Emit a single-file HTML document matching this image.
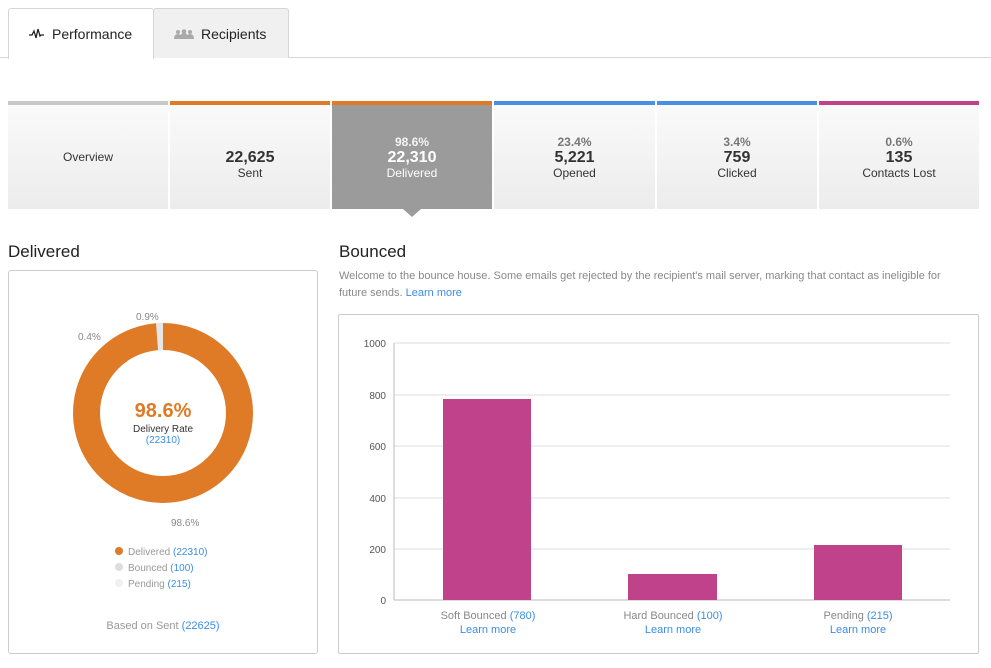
<!DOCTYPE html>
<html><head><style>
*{margin:0;padding:0;box-sizing:border-box}
body{width:991px;height:668px;background:#fff;font-family:"Liberation Sans",sans-serif;position:relative;overflow:hidden;color:#333}
.abs{position:absolute}
.tab{position:absolute;top:8px;height:50px;border:1px solid #d6d6d6;border-bottom:none;border-radius:3px 3px 0 0;font-size:14px;color:#222;display:flex;align-items:center}
.tile{position:absolute;top:101px;height:108px;width:160px;border-top:4px solid;background:linear-gradient(#fafafa,#ececec);text-align:center;display:flex;flex-direction:column;justify-content:center;align-items:center;color:#333}
.tile .p{font-size:12px;color:#777;font-weight:bold}
.tile .n{font-size:16px;font-weight:bold;line-height:17px}
.tile .l{font-size:12px}
.blue{color:#3a8ee6}
.g{color:#888}
</style></head><body>
<div class="abs" style="left:0;top:57px;width:991px;height:1px;background:#d6d6d6"></div>
<div class="tab" style="left:8px;width:146px;background:#fff;height:51px;padding-left:20px">
<svg width="16" height="12" viewBox="0 0 16 12" style="margin-right:7px"><path d="M0 7h3l2-4 2 7 2-9 2 7 1-1h3" fill="none" stroke="#222" stroke-width="1.3"/></svg>Performance</div>
<div class="tab" style="left:153px;width:136px;background:#f0f0f0;padding-left:20px">
<svg width="20" height="10" viewBox="0 0 20 10" style="margin-right:7px"><g fill="#aaa"><circle cx="4" cy="3" r="2"/><circle cx="10" cy="2.5" r="2.3"/><circle cx="16" cy="3" r="2"/><path d="M0 10q0-5 4-5 4 0 4 5zM6 10q0-6 4-6 4 0 4 6zM12 10q0-5 4-5 4 0 4 5z"/></g></svg>Recipients</div>

<div class="tile" style="left:8px;border-color:#c8c8c8"><div class="l">Overview</div></div>
<div class="tile" style="left:170px;border-color:#df7a26"><div class="n" style="margin-top:14px">22,625</div><div class="l">Sent</div></div>
<div class="tile" style="left:332px;border-color:#df7a26;background:#9b9b9b;color:#fff"><div class="p" style="color:#f4f4f4">98.6%</div><div class="n">22,310</div><div class="l">Delivered</div></div>
<div class="abs" style="left:403px;top:209px;width:0;height:0;border-left:9px solid transparent;border-right:9px solid transparent;border-top:8px solid #9b9b9b"></div>
<div class="tile" style="left:494px;width:161px;border-color:#4a90e2"><div class="p">23.4%</div><div class="n">5,221</div><div class="l">Opened</div></div>
<div class="tile" style="left:657px;border-color:#4a90e2"><div class="p">3.4%</div><div class="n">759</div><div class="l">Clicked</div></div>
<div class="tile" style="left:819px;border-color:#c0428a"><div class="p">0.6%</div><div class="n">135</div><div class="l">Contacts Lost</div></div>

<div class="abs" style="left:8px;top:242px;font-size:17px;color:#222">Delivered</div>
<div class="abs" style="left:8px;top:270px;width:310px;height:384px;border:1px solid #ccc;border-radius:3px"></div>
<svg class="abs" style="left:0;top:300px" width="330" height="240">
<circle cx="163" cy="113" r="76.5" fill="none" stroke="#df7a26" stroke-width="27"/>
<path d="M156 23 L163 23 L163 50 L158 50Z" fill="#e6e6e6"/>
</svg>
<div class="abs g" style="left:136px;top:312px;font-size:10px">0.9%</div>
<div class="abs g" style="left:78px;top:332px;font-size:10px">0.4%</div>
<div class="abs g" style="left:171px;top:518px;font-size:10px">98.6%</div>
<div class="abs" style="left:63px;top:398px;width:200px;text-align:center">
<div style="font-size:20px;font-weight:bold;color:#df7a26;line-height:26px">98.6%</div>
<div style="font-size:10px;color:#333">Delivery Rate</div>
<div style="font-size:10px" class="blue">(22310)</div></div>
<div class="abs" style="left:115px;top:545px;font-size:10px;line-height:16px;color:#999">
<div><span style="display:inline-block;width:8px;height:8px;border-radius:50%;background:#df7a26;margin-right:5px"></span>Delivered <span class="blue">(22310)</span></div>
<div><span style="display:inline-block;width:8px;height:8px;border-radius:50%;background:#ddd;margin-right:5px"></span>Bounced <span class="blue">(100)</span></div>
<div><span style="display:inline-block;width:8px;height:8px;border-radius:50%;background:#f0f0f0;margin-right:5px"></span>Pending <span class="blue">(215)</span></div></div>
<div class="abs" style="left:8px;top:620px;width:310px;text-align:center;font-size:11px;color:#999">Based on Sent <span class="blue">(22625)</span></div>

<div class="abs" style="left:339px;top:242px;font-size:17px;color:#222">Bounced</div>
<div class="abs" style="left:339px;top:268px;width:632px;font-size:11px;line-height:17px;color:#888">Welcome to the bounce house. Some emails get rejected by the recipient's mail server, marking that contact as ineligible for future sends. <span class="blue">Learn more</span></div>
<div class="abs" style="left:338px;top:314px;width:641px;height:340px;border:1px solid #ccc;border-radius:2px"></div>
<svg class="abs" style="left:338px;top:314px" width="641" height="340" font-family="Liberation Sans" font-size="10" fill="#555">
<g stroke="#ddd"><line x1="56" y1="29" x2="612" y2="29"/><line x1="56" y1="81" x2="612" y2="81"/><line x1="56" y1="132" x2="612" y2="132"/><line x1="56" y1="184" x2="612" y2="184"/><line x1="56" y1="235" x2="612" y2="235"/></g>
<line x1="56" y1="286" x2="612" y2="286" stroke="#bbb"/>
<line x1="56" y1="29" x2="56" y2="286" stroke="#bbb"/>
<g text-anchor="end"><text x="48" y="33">1000</text><text x="48" y="85">800</text><text x="48" y="136">600</text><text x="48" y="188">400</text><text x="48" y="239">200</text><text x="48" y="290">0</text></g>
<g fill="#c0428a"><rect x="105" y="85" width="88" height="201"/><rect x="290" y="260" width="89" height="26"/><rect x="476" y="231" width="88" height="55"/></g>
</svg>
<div class="abs" style="left:388px;top:609px;width:200px;text-align:center;font-size:11px;line-height:14px;color:#888">Soft Bounced <span class="blue">(780)</span><br><span class="blue">Learn more</span></div>
<div class="abs" style="left:573px;top:609px;width:200px;text-align:center;font-size:11px;line-height:14px;color:#888">Hard Bounced <span class="blue">(100)</span><br><span class="blue">Learn more</span></div>
<div class="abs" style="left:758px;top:609px;width:200px;text-align:center;font-size:11px;line-height:14px;color:#888">Pending <span class="blue">(215)</span><br><span class="blue">Learn more</span></div>
</body></html>
